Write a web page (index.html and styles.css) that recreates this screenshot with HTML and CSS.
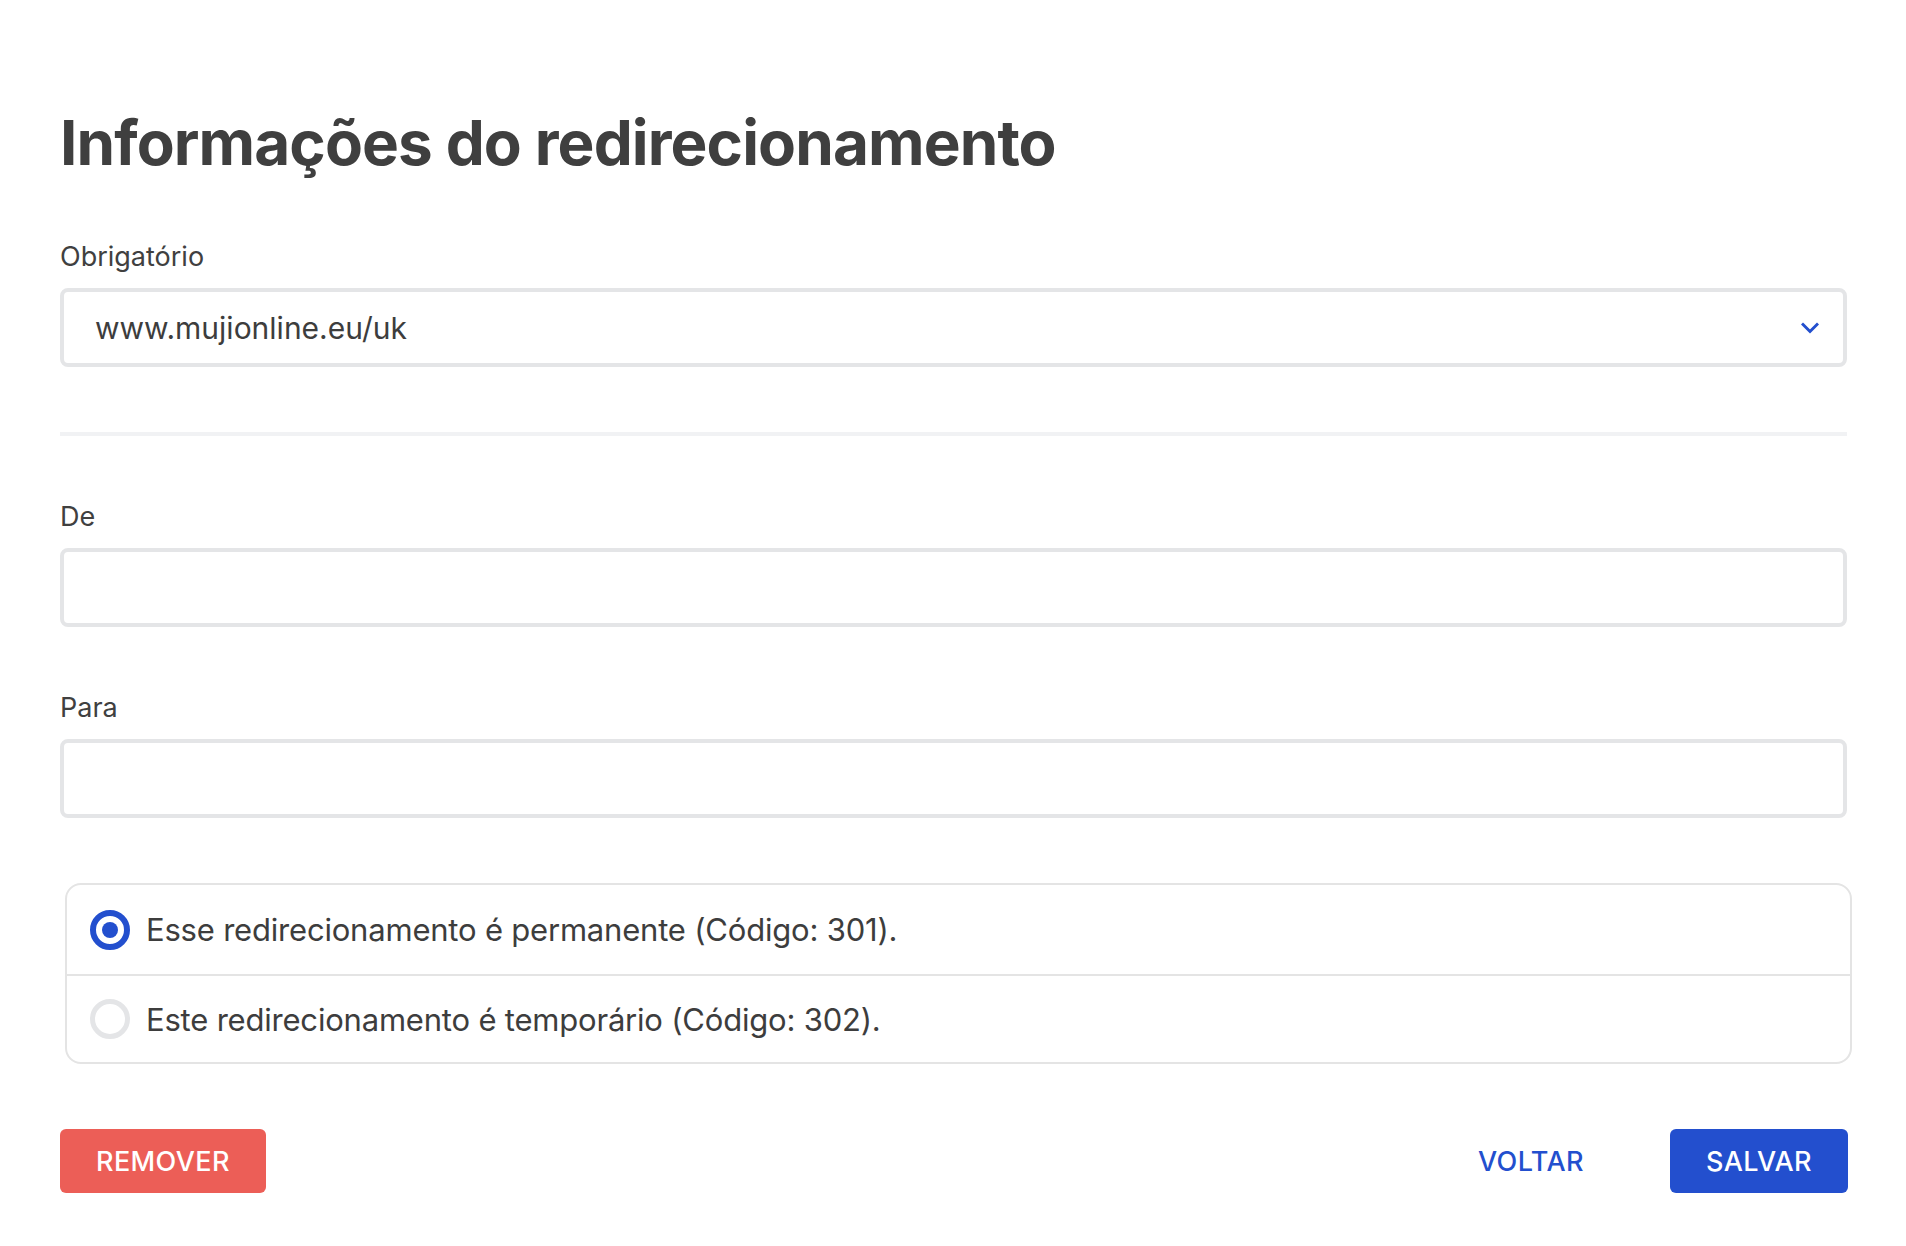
FILE: index.html
```html
<!DOCTYPE html>
<html lang="pt-BR">
<head>
<meta charset="utf-8">
<title>Informações do redirecionamento</title>
<link rel="stylesheet" href="styles.css">
</head>
<body>
<main class="page">
  <h1 class="title">Informações do redirecionamento</h1>

  <div class="field field-first">
    <label class="label">Obrigatório</label>
    <div class="select">
      <span class="select-value">www.mujionline.eu/uk</span>
      <svg class="chevron" width="18" height="12" viewBox="0 0 18 12" aria-hidden="true">
        <path d="M2 2.5 L9 9.5 L16 2.5" fill="none" stroke="#234fce" stroke-width="3" stroke-linecap="square" stroke-linejoin="miter"/>
      </svg>
    </div>
  </div>

  <hr class="divider">

  <div class="field">
    <label class="label">De</label>
    <div class="input"></div>
  </div>

  <div class="field field-next">
    <label class="label">Para</label>
    <div class="input"></div>
  </div>

  <div class="radios">
    <div class="radio-row">
      <span class="radio radio-on"><span class="radio-dot"></span></span>
      <span class="radio-text">Esse redirecionamento é permanente (Código: 301).</span>
    </div>
    <div class="radio-row">
      <span class="radio radio-off"></span>
      <span class="radio-text">Este redirecionamento é temporário (Código: 302).</span>
    </div>
  </div>

  <div class="actions">
    <button class="btn btn-danger">REMOVER</button>
    <div class="actions-right">
      <button class="btn btn-link">VOLTAR</button>
      <button class="btn btn-primary">SALVAR</button>
    </div>
  </div>
</main>
</body>
</html>
```

FILE: styles.css
```css
* { box-sizing: border-box; }

html, body {
  margin: 0;
  padding: 0;
  background: #ffffff;
}

body {
  font-family: Inter, "Noto Sans", "Liberation Sans", sans-serif;
  color: #3f3f3f;
}

.page {
  padding: 105px 59px 0 60px;
}

.title {
  margin: 0;
  font-size: 62px;
  line-height: 76px;
  font-weight: 700;
  letter-spacing: -0.9px;
  color: #3f3f3f;
}

.field-first {
  margin-top: 59px;
}

.label {
  display: block;
  font-size: 27px;
  line-height: 33px;
  font-weight: 400;
  color: #404040;
  margin-bottom: 15px;
}

.select,
.input {
  height: 79px;
  border: 4px solid #e4e5e7;
  border-radius: 8px;
  background: #fff;
}

.select {
  display: flex;
  align-items: center;
  justify-content: space-between;
  padding: 0 24px 0 31px;
}

.select-value {
  font-size: 30px;
  color: #3d3d3d;
}

.chevron {
  display: block;
}

.divider {
  margin: 65px 0 64px;
  border: 0;
  height: 4px;
  background: #f1f2f4;
}

.field-next {
  margin-top: 64px;
}

.radios {
  margin: 65px -5px 0 5px;
  border: 2px solid #e4e4e4;
  border-radius: 16px;
  overflow: hidden;
}

.radio-row {
  height: 89px;
  display: flex;
  align-items: center;
  padding-left: 23px;
  gap: 16px;
}

.radio-row + .radio-row {
  border-top: 2px solid #e4e4e4;
  height: 88px;
}

.radio {
  width: 40px;
  height: 40px;
  border-radius: 50%;
  display: flex;
  align-items: center;
  justify-content: center;
  flex: none;
}

.radio-on {
  border: 6px solid #234fce;
}

.radio-dot {
  width: 16px;
  height: 16px;
  border-radius: 50%;
  background: #234fce;
}

.radio-off {
  border: 5px solid #e4e5e7;
}

.radio-text {
  font-size: 31px;
  letter-spacing: -0.2px;
  color: #3d3d3d;
}

.actions {
  margin-top: 65px;
  display: flex;
  justify-content: space-between;
  align-items: center;
}

.actions-right {
  display: flex;
  align-items: center;
  gap: 50px;
  margin-right: -1px;
}

.btn {
  font-family: Inter, "Noto Sans", "Liberation Sans", sans-serif;
  font-size: 27px;
  font-weight: 450;
  letter-spacing: 0.4px;
  height: 64px;
  padding: 0 36px;
  border: 0;
  border-radius: 6px;
  cursor: pointer;
}

.btn-danger {
  background: #ec5e57;
  color: #ffffff;
}

.btn-link {
  background: transparent;
  color: #234fce;
}

.btn-primary {
  background: #234fce;
  color: #ffffff;
}
```
